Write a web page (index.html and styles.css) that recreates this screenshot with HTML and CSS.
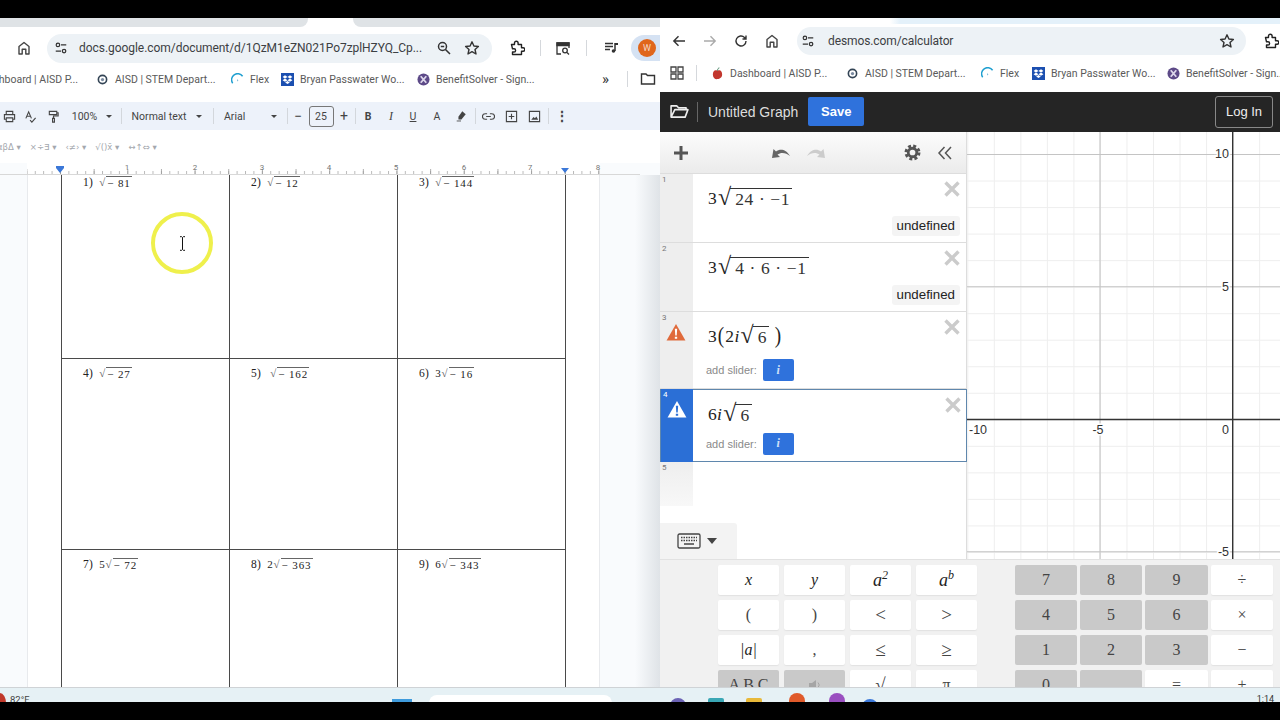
FILE: index.html
```html
<!DOCTYPE html>
<html lang="en">
<head>
<meta charset="utf-8">
<title>Docs and Desmos</title>
<link rel="stylesheet" href="styles.css">
</head>
<body>
<svg class="defs" width="0" height="0" aria-hidden="true">
  <symbol id="home" viewBox="0 0 16 16"><path d="M3 6.500 8 2.500l5 4V14h-3.200V9.200H6.200V14H3z" fill="none" stroke="#444" stroke-width="1.400" stroke-linejoin="round"/></symbol>
  <symbol id="tune" viewBox="0 0 16 16"><g fill="none" stroke="#333" stroke-width="1.400"><circle cx="4.500" cy="4.500" r="2"/><circle cx="11.500" cy="11.500" r="2"/><path d="M8 4.500h6M2 11.500h6"/></g></symbol>
  <symbol id="star" viewBox="0 0 16 16"><path d="m8 1.800 1.900 4.200 4.500.5-3.400 3 1 4.500L8 11.700 4 14l1-4.500-3.400-3 4.500-.5z" fill="none" stroke="#333" stroke-width="1.400" stroke-linejoin="round"/></symbol>
  <symbol id="puzzle" viewBox="0 0 16 16"><path d="M2.500 4.500h3V3a1.800 1.800 0 0 1 3.600 0v1.500h3.400v3.200H14a1.800 1.800 0 0 1 0 3.600h-1.500v3.200h-9v-2.500H5a1.500 1.500 0 0 0 0-3.200H3.500z" fill="none" stroke="#222" stroke-width="1.400" stroke-linejoin="round"/></symbol>
  <symbol id="zoom" viewBox="0 0 16 16"><g fill="none" stroke="#333" stroke-width="1.500"><circle cx="6.500" cy="6.500" r="4"/><path d="m9.500 9.500 4.500 4.500M4.800 6.500h3.400"/></g></symbol>
  <symbol id="tabsearch" viewBox="0 0 16 16"><g fill="none" stroke="#333" stroke-width="1.300"><path d="M6 14H2V3h12v5"/><path d="M2 3h12v2.500H2z" fill="#333"/><circle cx="10" cy="10.500" r="2.300"/><path d="m12 12.500 2 2"/></g></symbol>
  <symbol id="media" viewBox="0 0 16 16"><path d="M2 3.500h8M2 6.500h8M2 9.500h5M12 3v8" fill="none" stroke="#333" stroke-width="1.500"/><circle cx="10.500" cy="11" r="1.800" fill="#333"/><path d="M12 3h3v2h-3z" fill="#333"/></symbol>
  <symbol id="folder" viewBox="0 0 16 16"><path d="M1.500 3h4.500l1.500 1.500h7V13h-13z" fill="none" stroke="#333" stroke-width="1.400"/></symbol>
  <symbol id="dropbox" viewBox="0 0 14 14"><rect width="14" height="14" fill="#1b4fb0"/><path d="m4.300 2.500 2.700 1.800-2.700 1.700-2.600-1.700zm5.400 0 2.600 1.800L9.700 6 7 4.300zM4.300 6 7 7.800 4.300 9.500 1.700 7.800zm5.400 0 2.600 1.800-2.600 1.700L7 7.800zM4.500 10.200 7 8.600l2.500 1.600L7 11.800z" fill="#fff"/></symbol>
  <symbol id="flex" viewBox="0 0 14 14"><path d="M1.800 11A6 6 0 0 1 12.500 3.500" fill="none" stroke="#1f9fd0" stroke-width="1.600"/><path d="M6.500 6.500 8 8l-1.500 1.200z" fill="#7cb9d6"/></symbol>
  <symbol id="benefit" viewBox="0 0 14 14"><circle cx="7" cy="7" r="6.500" fill="#5d4a88"/><path d="M4 3.500 10 10.500M10 3.500 4 10.500" stroke="#dcd6ea" stroke-width="2"/></symbol>
  <symbol id="aisd" viewBox="0 0 12 12"><circle cx="6" cy="6" r="3.800" fill="none" stroke="#345" stroke-width="1.500"/><circle cx="6" cy="6" r="1.500" fill="#7a8aa0"/></symbol>
  <symbol id="warn" viewBox="0 0 22 20"><path d="M11 1 21.500 19.500H.5z" fill="currentColor"/><path d="M9.700 6.500h2.600l-.5 7.500h-1.600z M9.700 15.200h2.600v2.400H9.700z" fill="var(--warn-mark)"/></symbol>
  <symbol id="x" viewBox="0 0 16 16"><path d="m1.500 1.500 13 13m0-13-13 13" stroke="#cbcbcb" stroke-width="3.400" fill="none"/></symbol>
</svg>

<main class="stage">

  <section class="win win-left">
    <div class="tabs-left"><span class="tab tab-a"></span><span class="tab tab-b"></span></div>
    <div class="nav nav-left">
      <svg class="ic ic-home"><use href="#home"/></svg>
      <div class="pill pill-left">
        <svg class="ic ic-tune"><use href="#tune"/></svg>
        <span class="url url-left">docs.google.com/document/d/1QzM1eZN021Po7zplHZYQ_Cp...</span>
        <svg class="ic"><use href="#zoom"/></svg>
        <svg class="ic"><use href="#star"/></svg>
      </div>
      <svg class="ic ic-ext"><use href="#puzzle"/></svg>
      <span class="vsep vsep-a"></span>
      <svg class="ic ic-tab"><use href="#tabsearch"/></svg>
      <span class="vsep vsep-b"></span>
      <svg class="ic ic-media"><use href="#media"/></svg>
      <span class="avatar-wrap"><span class="avatar">W</span></span>
    </div>
    <div class="bookmarks bm-left">
      <span class="bm bm-cut">Dashboard | AISD P...</span>
      <span class="bm bm-a"><svg class="bi"><use href="#aisd"/></svg>AISD | STEM Depart...</span>
      <span class="bm bm-b"><svg class="bi"><use href="#flex"/></svg>Flex</span>
      <span class="bm bm-c"><svg class="bi"><use href="#dropbox"/></svg>Bryan Passwater Wo...</span>
      <span class="bm bm-d"><svg class="bi"><use href="#benefit"/></svg>BenefitSolver - Sign...</span>
      <span class="chev">»</span>
      <span class="vsep vsep-c"></span>
      <svg class="ic ic-bmf"><use href="#folder"/></svg>
    </div>
    <div class="doc-tools">
      <svg class="dt" viewBox="0 0 14 14"><path d="M3.500 5V1.500h7V5M3.500 10H1.500V5h11v5h-2M3.500 8.500h7v4h-7z" fill="none" stroke="#444" stroke-width="1.200"/></svg>
      <svg class="dt" viewBox="0 0 14 14"><path d="m2 9 3-7 3 7M3 6.800h4M6.500 11l2 2 4-4.500" fill="none" stroke="#444" stroke-width="1.200"/></svg>
      <svg class="dt" viewBox="0 0 14 14"><path d="M2.500 1.500h8v3.500h-8zM10.500 3H12v3.500H7V9M6 9h2v4H6z" fill="none" stroke="#444" stroke-width="1.200"/></svg>
      <span class="dtx">100%</span>
      <span class="caret"></span>
      <span class="dsep"></span>
      <span class="dtx">Normal text</span>
      <span class="caret"></span>
      <span class="dsep"></span>
      <span class="dtx dtx-font">Arial</span>
      <span class="caret"></span>
      <span class="dsep"></span>
      <span class="dtx dtx-op">−</span>
      <span class="sizebox">25</span>
      <span class="dtx dtx-op">+</span>
      <span class="dsep"></span>
      <b class="dtx">B</b>
      <i class="dtx dtx-i">I</i>
      <u class="dtx">U</u>
      <span class="dtx">A</span>
      <svg class="dt dt-s" viewBox="0 0 14 14"><path d="m8.500 1.500 4 3.500-5 6H4V8z" fill="#444"/><path d="M2 12.800h5" stroke="#444"/></svg>
      <span class="dsep"></span>
      <svg class="dt" viewBox="0 0 14 14"><path d="M5.500 4h-2a3 3 0 0 0 0 6h2M8.500 4h2a3 3 0 0 1 0 6h-2M4.500 7h5" fill="none" stroke="#444" stroke-width="1.200"/></svg>
      <svg class="dt" viewBox="0 0 14 14"><path d="M1.500 1.500h11v11h-11zM7 4v6M4 7h6" fill="none" stroke="#444" stroke-width="1.200"/></svg>
      <svg class="dt" viewBox="0 0 14 14"><path d="M1.500 1.500h11v11h-11z" fill="none" stroke="#444" stroke-width="1.200"/><path d="m3.500 10.500 2.500-3 1.500 1.500 1.500-2 2 3.500z" fill="#444"/></svg>
      <span class="dsep"></span>
      <span class="dtx dtx-dots">⋮</span>
    </div>
    <div class="eq-bar">
      <span>αβΔ ▾</span><span>×÷∃ ▾</span><span>‹≠› ▾</span><span>√()x̄ ▾</span><span>↔↑⇔ ▾</span>
    </div>
    <svg class="ruler" width="660" height="12" viewBox="0 0 660 12">
      <defs>
        <pattern id="rt" x="60" y="0" width="8.410" height="12" patternUnits="userSpaceOnUse"><path d="M.5 8v3" stroke="#999" stroke-width=".7"/></pattern>
        <pattern id="rh" x="60" y="0" width="33.650" height="12" patternUnits="userSpaceOnUse"><path d="M.5 6v5" stroke="#999" stroke-width=".8"/></pattern>
      </defs>
      <rect x="27" width="573" height="12" fill="url(#rt)"/>
      <rect x="27" width="573" height="12" fill="url(#rh)"/>
      <rect x="0" y="11" width="640" height="1" fill="#d8d8d8"/>
      <g class="ruler-n">
        <text x="127" y="7">1</text><text x="195" y="7">2</text><text x="262" y="7">3</text><text x="329" y="7">4</text><text x="396" y="7">5</text><text x="464" y="7">6</text><text x="530" y="7">7</text><text x="598" y="7">8</text>
      </g>
      <path d="M56 3h8v2l-4 5-4-5zM561 5h8l-4 5z" fill="#3b78d8"/>
    </svg>
    <div class="doc">
      <div class="page">
        <div class="sheet">
          <div class="cell r1"><span class="n">1)</span><span class="m"><span class="s">√</span><span class="o">− 81</span></span></div>
          <div class="cell r1"><span class="n">2)</span><span class="m"><span class="s">√</span><span class="o">− 12</span></span></div>
          <div class="cell r1 end"><span class="n">3)</span><span class="m"><span class="s">√</span><span class="o">− 144</span></span></div>
          <div class="cell r2"><span class="n">4)</span><span class="m"><span class="s">√</span><span class="o">− 27</span></span></div>
          <div class="cell r2"><span class="n">5)</span><span class="m m-wide"><span class="s">√</span><span class="o">− 162</span></span></div>
          <div class="cell r2 end"><span class="n">6)</span><span class="m">3<span class="s">√</span><span class="o">− 16</span></span></div>
          <div class="cell r3"><span class="n">7)</span><span class="m">5<span class="s">√</span><span class="o">− 72</span></span></div>
          <div class="cell r3"><span class="n">8)</span><span class="m">2<span class="s">√</span><span class="o">− 363</span></span></div>
          <div class="cell r3 end"><span class="n">9)</span><span class="m">6<span class="s">√</span><span class="o">− 343</span></span></div>
        </div>
      </div>
      <div class="cursor-ring">
        <svg class="ibeam" viewBox="0 0 7 15"><path d="M1 .7h1.700l.8.8.8-.8H6M3.500 1.500v12M1 14.300h1.700l.8-.8.8.8H6" fill="none" stroke="#111" stroke-width="1"/></svg>
      </div>
    </div>
    <div class="taskbar tb-left">
      <span class="wx"></span><span class="temp">82°F</span>
      <span class="winlogo"></span><span class="search"></span>
    </div>
  </section>

  <section class="win win-right">
    <div class="tabs-right"></div>
    <div class="nav nav-right">
      <svg class="ic ic-back" viewBox="0 0 16 16"><path d="M14 8H3M7.500 3.200 2.800 8l4.700 4.800" fill="none" stroke="#333" stroke-width="1.400"/></svg>
      <svg class="ic ic-fwd" viewBox="0 0 16 16"><path d="M2 8h11M8.500 3.200 13.200 8l-4.700 4.800" fill="none" stroke="#aaa" stroke-width="1.400"/></svg>
      <svg class="ic ic-rel" viewBox="0 0 16 16"><path d="M13 8a5 5 0 1 1-1.500-3.600L13 6M13 2.500V6H9.500" fill="none" stroke="#333" stroke-width="1.400"/></svg>
      <svg class="ic ic-h2"><use href="#home"/></svg>
      <div class="pill pill-right">
        <svg class="ic ic-tune"><use href="#tune"/></svg>
        <span class="url url-right">desmos.com/calculator</span>
        <svg class="ic"><use href="#star"/></svg>
      </div>
      <svg class="ic ic-ext2"><use href="#puzzle"/></svg>
    </div>
    <div class="bookmarks bm-right">
      <svg class="ic ic-apps" viewBox="0 0 14 14"><path d="M1 1h5v5H1zM8 1h5v5H8zM1 8h5v5H1zM8 8h5v5H8z" fill="none" stroke="#444" stroke-width="1.300"/></svg>
      <span class="vsep vsep-d"></span>
      <span class="bm bm-e"><svg class="bi" viewBox="0 0 14 14"><path d="M7 4C4 2.500 2 4.500 2 8s2.500 5.500 5 5 5-1.500 5-5-2-5.500-5-4z" fill="#c2372e"/><path d="M7 4c0-2 1-3 2-3" stroke="#375" fill="none"/></svg>Dashboard | AISD P...</span>
      <span class="bm bm-f"><svg class="bi"><use href="#aisd"/></svg>AISD | STEM Depart...</span>
      <span class="bm bm-g"><svg class="bi"><use href="#flex"/></svg>Flex</span>
      <span class="bm bm-h"><svg class="bi"><use href="#dropbox"/></svg>Bryan Passwater Wo...</span>
      <span class="bm bm-i"><svg class="bi"><use href="#benefit"/></svg>BenefitSolver - Sign...</span>
    </div>
    <div class="desmos">
      <header class="dm-head">
        <svg class="dm-folder" viewBox="0 0 20 16"><path d="M1 14V2h6l2 2h8v2M1 14h15l3-8H5z" fill="none" stroke="#eee" stroke-width="1.700" stroke-linejoin="round"/></svg>
        <span class="dm-sep"></span>
        <span class="dm-title">Untitled Graph</span>
        <span class="dm-save">Save</span>
        <span class="dm-login">Log In</span>
      </header>
      <div class="dm-main">
        <aside class="panel">
          <div class="panel-tools">
            <svg class="pt pt-plus" viewBox="0 0 16 16"><path d="M8 1v14M1 8h14" stroke="#555" stroke-width="3"/></svg>
            <svg class="pt pt-undo" viewBox="0 0 20 14"><path d="M1 12 2.500 3l2.500 2.500C9 2.500 15 3 19 10c-4-3.500-9-4-12.500-1.500L9 11z" fill="#666"/></svg>
            <svg class="pt pt-redo" viewBox="0 0 20 14"><path d="M19 12 17.500 3 15 5.500C11 2.500 5 3 1 10c4-3.500 9-4 12.500-1.500L11 11z" fill="#ccc"/></svg>
            <svg class="pt pt-gear" viewBox="0 0 16 16"><circle cx="8" cy="8" r="6" fill="none" stroke="#555" stroke-width="3" stroke-dasharray="2.700 2"/><circle cx="8" cy="8" r="4" fill="none" stroke="#555" stroke-width="2.600"/></svg>
            <svg class="pt pt-hide" viewBox="0 0 16 16"><path d="M7.500 2 2 8l5.500 6M14 2 8.500 8l5.500 6" fill="none" stroke="#555" stroke-width="1.500"/></svg>
          </div>
          <div class="expr expr-1">
            <div class="gut"><span class="num">1</span></div>
            <div class="body">
              <div class="math">3<span class="s2">√</span><span class="o2">24 · −1</span></div>
              <svg class="close"><use href="#x"/></svg>
              <span class="badge">undefined</span>
            </div>
          </div>
          <div class="expr expr-1">
            <div class="gut"><span class="num">2</span></div>
            <div class="body">
              <div class="math">3<span class="s2">√</span><span class="o2">4 · 6 · −1</span></div>
              <svg class="close"><use href="#x"/></svg>
              <span class="badge">undefined</span>
            </div>
          </div>
          <div class="expr expr-3">
            <div class="gut"><span class="num">3</span><svg class="warn warn-o"><use href="#warn"/></svg></div>
            <div class="body body-3">
              <div class="math">3<span class="paren">(</span>2<i>i</i><span class="s2">√</span><span class="o2">6</span><span class="paren paren-r">)</span></div>
              <svg class="close"><use href="#x"/></svg>
              <div class="slider"><span>add slider:</span><span class="slide-i">i</span></div>
            </div>
          </div>
          <div class="expr expr-4">
            <div class="gut gut-on"><span class="num num-on">4</span><svg class="warn warn-w"><use href="#warn"/></svg></div>
            <div class="body body-4">
              <div class="math">6<i>i</i><span class="s2">√</span><span class="o2">6</span></div>
              <svg class="close"><use href="#x"/></svg>
              <div class="slider"><span>add slider:</span><span class="slide-i">i</span></div>
            </div>
          </div>
          <div class="expr expr-5">
            <div class="gut gut-fade"><span class="num">5</span></div>
          </div>
          <div class="kb-tab">
            <svg class="kb-ic" viewBox="0 0 24 16"><rect x="1" y="1" width="22" height="14" rx="1.500" fill="none" stroke="#444" stroke-width="1.300"/><path d="M4 4.500h16M4 7.500h16" stroke="#444" stroke-width="1.500" stroke-dasharray="1.500 1"/><path d="M7 11h10" stroke="#444" stroke-width="1.500"/></svg>
            <span class="kb-caret"></span>
          </div>
        </aside>
        <div class="graph">
          <svg class="plot" width="313" height="427" viewBox="967 132 313 427">
            <defs>
              <pattern id="minor" x="967.300" y="154" width="26.530" height="26.530" patternUnits="userSpaceOnUse"><path d="M.5 0v26.530M0 .5h26.530" stroke="#eeeeee" stroke-width="1" fill="none"/></pattern>
            </defs>
            <rect x="967" y="132" width="313" height="427" fill="url(#minor)"/>
            <path d="M1100 132v427M967 154.500h313M967 286.700h313M967 551.700h313" stroke="#c4c4c4" stroke-width="1.100" fill="none"/>
            <path d="M1232.700 132v427M967 419.500h313" stroke="#333" stroke-width="1.400" fill="none"/>
            <g class="plot-n">
              <text x="1229" y="158" text-anchor="end">10</text>
              <text x="1229" y="291" text-anchor="end">5</text>
              <text x="1229" y="556" text-anchor="end">-5</text>
              <text x="969" y="434">-10</text>
              <text x="1098" y="434" text-anchor="middle">-5</text>
              <text x="1229" y="434" text-anchor="end">0</text>
            </g>
          </svg>
        </div>
      </div>
      <div class="keypad">
        <div class="keys keys-l">
          <span class="key it">x</span><span class="key it">y</span><span class="key it pow"><span>a<sup>2</sup></span></span><span class="key it pow"><span>a<sup>b</sup></span></span>
          <span class="key">(</span><span class="key">)</span><span class="key big">&lt;</span><span class="key big">&gt;</span>
          <span class="key it">|a|</span><span class="key">,</span><span class="key big">≤</span><span class="key big">≥</span>
          <span class="key dark">A B C</span><span class="key dark"><svg class="spk" viewBox="0 0 14 12"><path d="M1 4h3l4-3v10L4 8H1z" fill="#a5a5a5"/><path d="M10 3.500a3.500 3.500 0 0 1 0 5" fill="none" stroke="#a5a5a5"/></svg></span><span class="key big">√</span><span class="key">π</span>
        </div>
        <div class="keys keys-r">
          <span class="key dark">7</span><span class="key dark">8</span><span class="key dark">9</span><span class="key">÷</span>
          <span class="key dark">4</span><span class="key dark">5</span><span class="key dark">6</span><span class="key">×</span>
          <span class="key dark">1</span><span class="key dark">2</span><span class="key dark">3</span><span class="key">−</span>
          <span class="key dark">0</span><span class="key dark"></span><span class="key">=</span><span class="key">+</span>
        </div>
      </div>
    </div>
    <div class="taskbar tb-right">
      <span class="dot d1"></span><span class="dot d2"></span><span class="dot d3"></span><span class="dot d4"></span><span class="dot d5"></span><span class="dot d6"></span>
      <span class="clock">1:14</span>
    </div>
  </section>

</main>
</body>
</html>
```

FILE: styles.css
```css
* { box-sizing: border-box; }
html, body { margin: 0; height: 720px; overflow: hidden; background: #000; }
body { font-family: Roboto, "Liberation Sans", sans-serif; color: #333; }
.defs { position: absolute; }

.stage { display: flex; height: 702px; padding-top: 18px; }
.win { display: flex; flex-direction: column; height: 684px; overflow: hidden; background: #fff; }
.win-left { width: 660px; }
.win-right { width: 620px; }

/* browser chrome */
.tabs-left { display: flex; height: 15px; flex: none; gap: 45px; align-items: flex-start; }
.tab { height: 9px; background: #dfe3e6; }
.tab-a { width: 308px; border-radius: 0 0 8px 0; }
.tab-b { width: 307px; border-radius: 0 0 0 8px; }
.tabs-right { height: 6px; flex: none; background: linear-gradient(90deg, #fff 0 230px, #e4f1fa 240px); }

.nav { display: flex; align-items: center; flex: none; }
.nav-left { height: 30px; padding-left: 16px; }
.nav-right { height: 34px; padding-left: 11px; }
.ic { width: 16px; height: 16px; flex: none; }
.pill { display: flex; flex: none; align-items: center; height: 29px; border-radius: 15px; background: #edf2f6; }
.pill-left { width: 445px; margin-left: 15px; padding: 0 12px 0 7px; gap: 12px; }
.pill-right { width: 449px; height: 28px; margin-left: 17px; padding: 0 11px 0 4px; }
.ic-tune { width: 14px; height: 14px; }
.url { flex: 1; min-width: 0; font-size: 12px; white-space: nowrap; overflow: hidden; color: #3c4043; }
.url-left { margin-left: -1px; letter-spacing: -.05px; }
.url-right { margin-left: 13px; letter-spacing: -.1px; }
.ic-ext { margin-left: 17px; }
.vsep { width: 1px; height: 16px; background: #d5d8dc; flex: none; }
.vsep-a { margin-left: 15px; }
.ic-tab { margin-left: 14px; }
.vsep-b { margin-left: 15px; }
.ic-media { margin-left: 16px; }
.avatar-wrap { display: flex; flex: none; align-items: center; justify-content: flex-start; width: 31px; height: 26px; margin-left: 12px; padding-left: 7px; background: #d5e2f3; border-radius: 13px 0 0 13px; }
.avatar { display: flex; align-items: center; justify-content: center; width: 18px; height: 18px; border-radius: 50%; background: #e0661b; color: #f6d9c5; font-size: 9px; }
.ic-fwd, .ic-rel, .ic-h2 { margin-left: 15px; }
.ic-ext2 { margin-left: 17px; }

.bookmarks { display: flex; align-items: center; flex: none; font-size: 10.500px; color: #5a5a5a; white-space: nowrap; }
.bm-left { height: 34px; padding-bottom: 2px; }
.bm-right { height: 34px; padding: 0 0 4px 10px; overflow: hidden; }
.bm { display: flex; align-items: center; gap: 6px; flex: none; }
.bi { width: 13px; height: 13px; flex: none; }
.bm-cut { width: 78px; justify-content: flex-end; overflow: hidden; }
.bm-a { margin-left: 18px; width: 123px; }
.bm-b { margin-left: 12px; width: 37px; }
.bm-c { margin-left: 13px; width: 121px; }
.bm-d { margin-left: 15px; width: 118px; }
.chev { margin-left: 67px; font-size: 15px; color: #333; }
.vsep-c { margin-left: 18px; }
.ic-bmf { margin-left: 12px; }
.ic-apps { width: 14px; height: 14px; }
.vsep-d { margin-left: 12px; }
.bm-e { margin-left: 14px; width: 122px; }
.bm-f { margin-left: 13px; width: 123px; }
.bm-g { margin-left: 12px; width: 37px; }
.bm-h { margin-left: 14px; width: 121px; }
.bm-i { margin-left: 14px; width: 118px; }

/* docs */
.doc-tools { display: grid; flex: none; align-items: center; justify-items: center; height: 28px; margin-top: 5px; background: #edf2fa; font-size: 10.500px; color: #444;
  grid-template-columns: 18px 24px 22px 41px 8px 16px 60px 20px 8px 49px 16px 10px 12px 34px 12px 10px 16px 30px 14px 34px 14px 14px 12px 34px 12px 16px 12px; }
.dt { width: 13px; height: 13px; }
.dt-s { width: 12px; height: 12px; }
.dtx { white-space: nowrap; }
.dtx-font { justify-self: start; margin-left: 7px; }
.dtx-op { font-size: 14px; }
.dtx-i { font-family: "Liberation Serif", serif; font-size: 12px; }
.dtx-dots { font-size: 14px; font-weight: 700; }
.caret { width: 0; height: 0; border: 3px solid transparent; border-top: 3.500px solid #444; border-bottom: 0; }
.dsep { width: 1px; height: 16px; background: #d3d7dc; }
.sizebox { display: flex; align-items: center; justify-content: center; width: 25px; height: 21px; border: 1px solid #777; border-radius: 3px; font-size: 10.500px; }
.eq-bar { display: flex; flex: none; align-items: center; gap: 9px; height: 33px; margin-left: -3px; font: 8.500px "DejaVu Sans", sans-serif; color: #a4a8ae; white-space: nowrap; }
.ruler { display: block; flex: none; background: linear-gradient(90deg, #f9fbfd 0 27px, #fff 27px 600px, #f9fbfd 600px); }
.ruler-n { font: 8px Roboto, sans-serif; fill: #777; text-anchor: middle; }

.doc { position: relative; flex: 1; min-height: 0; overflow: hidden; background: linear-gradient(90deg, #f9fbfd 0 635px, #dfe3e7 660px); }
.page { width: 573px; height: 100%; margin-left: 27px; padding-left: 34px; background: #fff; border-left: 1px solid #e8eaed; border-right: 1px solid #e8eaed; }
.sheet { display: grid; grid-template-columns: repeat(3, 168px); grid-template-rows: 184px 191px 137px; margin-left: -1px; }
.cell { display: flex; align-items: flex-start; gap: 6px; padding: 1px 0 0 21px; border-left: 1.300px solid #4a4a4a; border-bottom: 1.300px solid #4a4a4a; font: 11px/13px "Liberation Serif", serif; color: #222; white-space: nowrap; }
.cell.r2, .cell.r3 { padding-top: 8px; }
.cell.r3 { border-bottom: 0; }
.cell.end { border-right: 1.300px solid #4a4a4a; width: 169px; }
.n { font-size: 11.500px; letter-spacing: .3px; }
.m { display: inline-flex; align-items: flex-start; letter-spacing: .9px; }
.m-wide { margin-left: 3px; }
.s { font-size: 11px; color: #555; }
.o { padding: 0 1px; border-top: 1px solid #666; line-height: 12px; }

.cursor-ring { position: absolute; left: 151px; top: 37px; width: 62px; height: 62px; display: flex; align-items: center; justify-content: center; border: 4px solid #eff04c; border-radius: 50%; }
.ibeam { width: 7px; height: 15px; }

.taskbar { display: flex; align-items: flex-start; flex: none; height: 15px; overflow: hidden; background: #e6f1f5; border-top: 1px solid #cfd3d6; }
.wx { width: 12px; height: 20px; margin: 5px 0 0 -6px; border-radius: 50%; background: #c0392b; }
.temp { margin: 6px 0 0 4px; font-size: 9.500px; color: #444; }
.winlogo { width: 20px; height: 8px; margin: 11px 0 0 363px; background: #3f9bdc; }
.search { width: 183px; height: 14px; margin: 7px 0 0 17px; background: #fff; border-radius: 8px 8px 0 0; }

/* desmos */
.desmos { display: flex; flex: 1; min-height: 0; flex-direction: column; overflow: hidden; }
.dm-head { display: flex; flex: none; align-items: center; height: 40px; padding: 0 7px 1px 10px; background: #252525; color: #eee; }
.dm-folder { width: 19px; height: 15px; }
.dm-sep { width: 1px; height: 20px; margin-left: 8px; background: #666; }
.dm-title { margin-left: 10px; font: 14px "Liberation Sans", sans-serif; color: #ddd; }
.dm-save { display: flex; align-items: center; justify-content: center; width: 56px; height: 29px; margin-left: 10px; border-radius: 2px; background: #2f72dc; color: #fff; font: 700 13px "Liberation Sans", sans-serif; }
.dm-login { display: flex; align-items: center; justify-content: center; width: 58px; height: 32px; margin-left: auto; border: 1px solid #888; border-radius: 3px; font: 13px "Liberation Sans", sans-serif; }

.dm-main { display: flex; flex: none; height: 427px; }
.panel { position: relative; display: flex; flex-direction: column; width: 307px; flex: none; background: #fff; border-right: 1px solid #ddd; }
.panel-tools { display: flex; align-items: center; flex: none; height: 42px; padding-left: 13px; background: linear-gradient(#fcfcfc, #ebebeb); border-bottom: 1px solid #ddd; }
.pt { flex: none; }
.pt-plus { width: 16px; height: 16px; }
.pt-undo { width: 20px; height: 14px; margin-left: 82px; }
.pt-redo { width: 20px; height: 14px; margin-left: 15px; }
.pt-gear { width: 17px; height: 17px; margin-left: 78px; }
.pt-hide { width: 16px; height: 16px; margin-left: 16px; }

.expr { display: flex; flex: none; border-bottom: 1px solid #ddd; }
.expr-1 { height: 69px; }
.expr-3 { height: 77px; }
.expr-4 { height: 73px; width: 307px; border: 1px solid #5f87ad; }
.expr-5 { flex: 1; border: 0; }
.gut { position: relative; width: 33px; flex: none; background: #eeeeee; }
.gut-on { width: 32px; margin: -1px 0; background: #2b6fd6; }
.gut-fade { height: 44px; background: linear-gradient(#eee, #f8f8f8); }
.num { display: block; padding: 1px 0 0 2px; font-size: 8px; line-height: 10px; color: #777; }
.num-on { color: #fff; }
.warn { display: block; width: 20px; height: 18px; margin: 0 0 0 6px; }
.warn-o { color: #e06a3b; --warn-mark: #fff; }
.warn-w { color: #fff; --warn-mark: #2b6fd6; }
.body { display: grid; flex: 1; grid-template-columns: 1fr 16px; grid-template-rows: 42px 20px; padding: 0 6px 0 15px; }
.body-3 { grid-template-rows: 47px 22px; }
.body-4 { grid-template-rows: 42px 23px; padding-right: 5px; }
.math { display: flex; align-items: flex-start; padding-top: 14px; font: 17.500px/20px "Liberation Serif", serif; color: #222; letter-spacing: .3px; white-space: nowrap; }
.s2 { margin: -2px -1px 0 1px; font-size: 24px; line-height: 22px; letter-spacing: 0; }
.o2 { padding: 0 2px 0 5px; border-top: 1px solid #333; line-height: 21px; letter-spacing: .6px; color: #333; }
.paren { font-size: 24px; line-height: 18px; transform: scaleX(.8); }
.paren-r { margin-left: 5px; }
.close { width: 16px; height: 16px; margin: 7px 0 0 0; }
.badge { grid-column: 1 / -1; justify-self: end; display: flex; align-items: center; height: 20px; padding: 0 5px 1px; border-radius: 3px; background: #f4f4f4; font: 13.300px "Liberation Sans", sans-serif; color: #222; }
.slider { grid-column: 1 / -1; display: flex; align-items: center; gap: 6px; margin-left: -2px; font: 11px "Liberation Sans", sans-serif; color: #8a8a8a; }
.slide-i { display: flex; align-items: center; justify-content: center; width: 31px; height: 22px; border-radius: 2px; background: #2f72dc; color: #cfe0f8; font: italic 700 12px "Liberation Serif", serif; }
.kb-tab { position: absolute; left: 0; bottom: 0; display: flex; align-items: center; gap: 6px; width: 77px; height: 36px; padding-left: 17px; border-radius: 0 3px 0 0; background: #f3f3f3; }
.kb-ic { width: 24px; height: 16px; }
.kb-caret { width: 0; height: 0; border: 5px solid transparent; border-top: 6px solid #444; border-bottom: 0; }

.graph { flex: 1; background: #fff; overflow: hidden; }
.plot { display: block; }
.plot-n { font: 12.500px "Liberation Sans", sans-serif; fill: #333; paint-order: stroke; stroke: #fff; stroke-width: 3px; }

.keypad { display: flex; flex: 1; min-height: 0; overflow: hidden; padding: 5px 0 0 58px; background: #f1f1f1; border-top: 1px solid #e2e2e2; }
.keys { display: grid; grid-auto-rows: 30px; row-gap: 5px; flex: none; }
.keys-l { grid-template-columns: repeat(4, 61px); column-gap: 5px; }
.keys-r { grid-template-columns: 62px 62px 63px 62px; column-gap: 3px; margin-left: 38px; }
.key { display: flex; align-items: center; justify-content: center; height: 30px; border-radius: 2px; background: #fff; box-shadow: 0 1px 1px #e2e2e2; font: 16px "Liberation Serif", serif; color: #444; }
.key.dark { background: #c9c9c9; box-shadow: none; }
.key.it { font-style: italic; color: #222; }
.key.pow { font-size: 18px; }
.key.big { font-size: 19px; }
.key sup { font-size: 12px; line-height: 0; }
.spk { width: 14px; height: 12px; }

.tb-right { padding-left: 10px; }
.dot { width: 16px; height: 16px; margin-top: 10px; border-radius: 50%; flex: none; }
.d1 { background: #6c63b5; }
.d2 { background: #3aa7b5; margin-left: 22px; border-radius: 2px; }
.d3 { background: #e8b93a; margin-left: 22px; border-radius: 2px; }
.d4 { background: #e05a2a; margin-left: 27px; margin-top: 5px; }
.d5 { background: #9a4fc0; margin-left: 24px; margin-top: 5px; }
.d6 { background: #3b78d8; margin-left: 17px; margin-top: 11px; }
.clock { margin: 6px 0 0 auto; padding-right: 6px; font-size: 9px; color: #333; }
```
